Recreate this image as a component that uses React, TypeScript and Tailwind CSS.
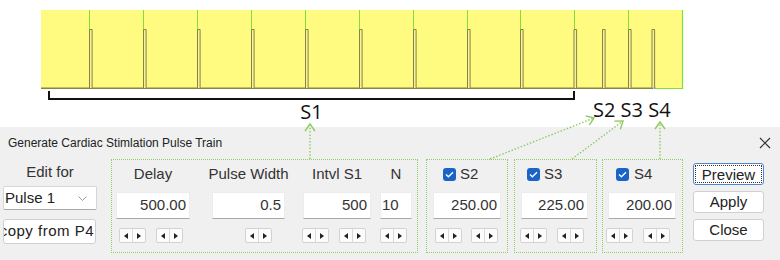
import React from "react";

const GRID = [89, 143, 197, 251, 305, 359, 413, 467, 520, 574, 628];
const PULSES = [89.5, 143.5, 197.5, 251.5, 305.5, 359.5, 413.5, 467.5, 520.5, 574, 602.5, 628.5, 652];

function Chart() {
  return (
    <svg width="780" height="127" className="block">
      <rect x="41" y="10" width="642" height="78" fill="#fffa80" />
      {GRID.map((x) => (
        <line key={x} x1={x + 0.5} y1="10" x2={x + 0.5} y2="88" stroke="#7fe03c" strokeWidth="1" />
      ))}
      <line x1="682.5" y1="10" x2="682.5" y2="89" stroke="#7fe03c" strokeWidth="1.2" />
      <line x1="654" y1="88.5" x2="683" y2="88.5" stroke="#7fe03c" strokeWidth="1" />
      <line x1="41" y1="88.2" x2="653" y2="88.2" stroke="#86853e" strokeWidth="1.4" />
      {PULSES.map((x) => (
        <path
          key={x}
          d={`M${x} 88 V29.5 H${x + 2.6} V88`}
          fill="#f6f2a0"
          stroke="#86853e"
          strokeWidth="1"
        />
      ))}
      <rect x="653.5" y="87" width="2" height="2" fill="#999" />
      <path d="M49 91 V99 H574 V91" fill="none" stroke="#111" strokeWidth="2" />
      <text x="311.5" y="119" textAnchor="middle" fontFamily="'Open Sans', sans-serif" fontSize="20" fill="#111">
        S1
      </text>
      <text x="593" y="117" fontFamily="'Open Sans', sans-serif" fontSize="20" fill="#111">
        S2 S3 S4
      </text>
    </svg>
  );
}

function Arrow({ x1, y1, x2, y2 }: { x1: number; y1: number; x2: number; y2: number }) {
  const dx = x2 - x1;
  const dy = y2 - y1;
  const L = Math.hypot(dx, dy);
  const ux = dx / L;
  const uy = dy / L;
  const px = -uy;
  const py = ux;
  const bx = x2 - ux * 7;
  const by = y2 - uy * 7;
  return (
    <g stroke="#8ccb62" strokeWidth="1.4" fill="none">
      <line x1={x1} y1={y1} x2={x2} y2={y2} strokeDasharray="1.5 1.8" />
      <polyline
        points={`${bx + px * 5},${by + py * 5} ${x2},${y2} ${bx - px * 5},${by - py * 5}`}
        strokeLinejoin="miter"
      />
    </g>
  );
}

function Arrows() {
  return (
    <svg width="780" height="260" className="absolute left-0 top-0 pointer-events-none">
      <Arrow x1={310} y1={159} x2={310} y2={124} />
      <Arrow x1={490} y1={159} x2={594} y2={118} />
      <Arrow x1={572} y1={159} x2={623} y2={121} />
      <Arrow x1={660} y1={159} x2={660} y2={122} />
    </svg>
  );
}

function Spin() {
  return (
    <div className="flex w-[27px] h-[15px] rounded-[2px] border border-[#d2d2d2] bg-[#fbfbfb] shrink-0">
      <div className="flex-1 flex items-center justify-center border-r border-[#d8d8d8]">
        <svg width="4" height="6" viewBox="0 0 4 6">
          <polygon points="4,0 4,6 0,3" fill="#222" />
        </svg>
      </div>
      <div className="flex-1 flex items-center justify-center">
        <svg width="4" height="6" viewBox="0 0 4 6">
          <polygon points="0,0 0,6 4,3" fill="#222" />
        </svg>
      </div>
    </div>
  );
}

function Field({ value, className }: { value: string; className: string }) {
  return (
    <div
      className={`h-[27px] bg-white border border-[#ececec] border-b-[#a9a9a9] flex items-center justify-end pr-[3px] text-[15px] text-[#333] whitespace-nowrap ${className}`}
    >
      {value}
    </div>
  );
}

function Check() {
  return (
    <div className="w-[13px] h-[13px] rounded-[3px] bg-[#1a64c8] flex items-center justify-center shrink-0">
      <svg width="9" height="7" viewBox="0 0 9 7">
        <polyline points="1,3.6 3.4,5.8 8,1.2" fill="none" stroke="white" strokeWidth="1.4" />
      </svg>
    </div>
  );
}

function Btn({ label, focus }: { label: string; focus?: boolean }) {
  return (
    <div
      className={`h-[22px] rounded-[3px] bg-white flex items-center justify-center text-[15px] text-[#222] ${
        focus ? "border border-[#4f86d0] p-[1px]" : "border border-[#d0d0d0]"
      }`}
    >
      {focus ? (
        <div className="w-full h-full border border-dotted border-[#333] flex items-center justify-center leading-none">
          {label}
        </div>
      ) : (
        label
      )}
    </div>
  );
}

export default function App() {
  return (
    <div className="relative w-[780px] h-[260px] overflow-hidden bg-white font-['Liberation_Sans',Arial,sans-serif]">
      <Chart />
      <div className="h-[133px] bg-[#f0f0f0] flex flex-col">
        <div className="h-[32px] shrink-0 flex items-center justify-between pl-[8px] pr-[9px]">
          <span className="text-[12px] text-[#222]">Generate Cardiac Stimlation Pulse Train</span>
          <svg width="12" height="12" viewBox="0 0 12 12">
            <path d="M1 1 L11 11 M11 1 L1 11" stroke="#333" strokeWidth="1.2" />
          </svg>
        </div>
        <div className="flex items-start">
          {/* left column */}
          <div className="ml-[3px] w-[94px] flex flex-col shrink-0">
            <div className="h-[27px] flex items-center justify-center text-[15px] text-[#333]">Edit for</div>
            <div className="h-[24px] bg-white border border-[#d6d6d6] border-b-[#a9a9a9] rounded-[2px] flex items-center justify-between pl-[1px] pr-[9px] text-[15px] text-[#222]">
              <span>Pulse 1</span>
              <svg width="9" height="5" viewBox="0 0 9 5">
                <polyline points="0.5,0.5 4.5,4.5 8.5,0.5" fill="none" stroke="#9a9a9a" strokeWidth="1" />
              </svg>
            </div>
            <div className="mt-[9px] h-[25px] w-[93px] bg-white border border-[#d0d0d0] rounded-[3px] overflow-hidden flex items-center justify-end pr-[1px] text-[15px] text-[#222] whitespace-nowrap tracking-[0.5px]">
              copy from P4
            </div>
          </div>

          {/* main group */}
          <div className="ml-[14px] w-[307px] h-[94px] border border-dotted border-[#8fcf5f] flex shrink-0 pl-[4px]">
            <div className="w-[74px] flex flex-col shrink-0">
              <div className="h-[28px] flex items-center justify-center text-[15px] text-[#333] whitespace-nowrap">Delay</div>
              <Field value="500.00" className="mt-[4px]" />
              <div className="mt-[9px] flex">
                <div className="ml-[3px]"><Spin /></div>
                <div className="ml-[10px]"><Spin /></div>
              </div>
            </div>
            <div className="ml-[22px] w-[73px] flex flex-col shrink-0">
              <div className="h-[28px] flex items-center justify-center text-[15px] text-[#333] whitespace-nowrap">Pulse Width</div>
              <Field value="0.5" className="mt-[4px]" />
              <div className="mt-[9px] flex">
                <div className="ml-[33px]"><Spin /></div>
              </div>
            </div>
            <div className="ml-[18px] w-[68px] flex flex-col shrink-0">
              <div className="h-[28px] flex items-center justify-center text-[15px] text-[#333] whitespace-nowrap">Intvl S1</div>
              <Field value="500" className="mt-[4px]" />
              <div className="mt-[9px] flex">
                <div className="-ml-[1px]"><Spin /></div>
                <div className="ml-[10px]"><Spin /></div>
              </div>
            </div>
            <div className="ml-[9px] w-[32px] flex flex-col shrink-0">
              <div className="h-[28px] flex items-center justify-center text-[15px] text-[#333] whitespace-nowrap">N</div>
              <div className="mt-[4px] h-[27px] bg-white border border-[#ececec] border-b-[#a9a9a9] flex items-center pl-[1px] text-[15px] text-[#333]">
                10
              </div>
              <div className="mt-[9px] flex">
                <Spin />
              </div>
            </div>
          </div>

          {/* S2 */}
          <div className="ml-[8px] w-[82px] h-[94px] border border-dotted border-[#8fcf5f] flex flex-col shrink-0">
            <div className="h-[28px] flex items-center pl-[16px] gap-[4px] text-[15px] text-[#333]">
              <Check />
              <span>S2</span>
            </div>
            <Field value="250.00" className="mt-[4px] ml-[6px] w-[68px]" />
            <div className="mt-[9px] flex">
              <div className="ml-[8px]"><Spin /></div>
              <div className="ml-[9px]"><Spin /></div>
            </div>
          </div>

          {/* S3 */}
          <div className="ml-[6px] w-[83px] h-[94px] border border-dotted border-[#8fcf5f] flex flex-col shrink-0">
            <div className="h-[28px] flex items-center pl-[12px] gap-[4px] text-[15px] text-[#333]">
              <Check />
              <span>S3</span>
            </div>
            <Field value="225.00" className="mt-[4px] ml-[6px] w-[67px]" />
            <div className="mt-[9px] flex">
              <div className="ml-[5px]"><Spin /></div>
              <div className="ml-[10px]"><Spin /></div>
            </div>
          </div>

          {/* S4 */}
          <div className="ml-[5px] w-[81px] h-[94px] border border-dotted border-[#8fcf5f] flex flex-col shrink-0">
            <div className="h-[28px] flex items-center pl-[13px] gap-[5px] text-[15px] text-[#333]">
              <Check />
              <span>S4</span>
            </div>
            <Field value="200.00" className="mt-[4px] ml-[5px] w-[68px]" />
            <div className="mt-[9px] flex">
              <div className="ml-[3px]"><Spin /></div>
              <div className="ml-[10px]"><Spin /></div>
            </div>
          </div>

          {/* buttons */}
          <div className="ml-[10px] mt-[4px] w-[71px] flex flex-col gap-[6px] shrink-0">
            <Btn label="Preview" focus />
            <Btn label="Apply" />
            <Btn label="Close" />
          </div>
        </div>
      </div>
      <Arrows />
    </div>
  );
}
